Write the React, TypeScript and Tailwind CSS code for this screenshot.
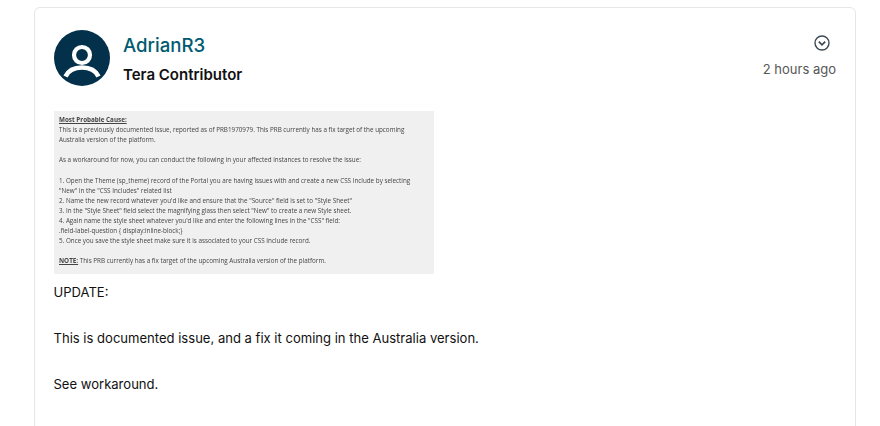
import React from "react";

const inter = { fontFamily: "Inter, sans-serif" };

function Avatar() {
  return (
    <svg width="56" height="56" viewBox="0 0 56 56" className="shrink-0">
      <circle cx="28" cy="28" r="28" fill="#03304a" />
      <circle cx="28" cy="25" r="8" fill="none" stroke="#fff" strokeWidth="4.2" />
      <path d="M11.5 46.5 C14.5 40 21 37.5 28 37.5 C35 37.5 41.5 40 44.5 46.5" fill="none" stroke="#fff" strokeWidth="4.6" />
    </svg>
  );
}

const lines: React.ReactNode[] = [
  <u className="font-bold">Most Probable Cause:</u>,
  "This is a previously documented issue, reported as of PRB1970979. This PRB currently has a fix target of the upcoming",
  "Australia version of the platform.",
  "\u00a0",
  "As a workaround for now, you can conduct the following in your affected instances to resolve the issue:",
  "\u00a0",
  "1. Open the Theme (sp_theme) record of the Portal you are having issues with and create a new CSS Include by selecting",
  "\"New\" in the \"CSS Includes\" related list",
  "2. Name the new record whatever you'd like and ensure that the \"Source\" field is set to \"Style Sheet\"",
  "3. In the \"Style Sheet\" field select the magnifying glass then select \"New\" to create a new Style sheet.",
  "4. Again name the style sheet whatever you'd like and enter the following lines in the \"CSS\" field:",
  ".field-label-question { display:inline-block;}",
  "5. Once you save the style sheet make sure it is associated to your CSS Include record.",
  "\u00a0",
  <span><u className="font-bold">NOTE:</u> This PRB currently has a fix target of the upcoming Australia version of the platform.</span>,
];

export default function App() {
  return (
    <div className="h-[426px] w-[880px] overflow-hidden bg-white" style={inter}>
      <div className="ml-[34px] mt-[7px] h-[500px] w-[822px] rounded-md border border-[#e6e6e6] bg-white pl-[19px] pr-[19px] pt-[22px]">
        <div className="flex items-start justify-between">
          <div className="flex gap-3">
            <Avatar />
            <div className="flex flex-col pl-[1px]">
              <span className="text-[18.6px] font-medium leading-[30px] text-[#005a72]">AdrianR3</span>
              <span className="mt-[3px] text-[15px] font-semibold leading-[24px] text-[#111]">Tera Contributor</span>
            </div>
          </div>
          <div className="flex flex-col items-end">
            <svg width="16" height="16" viewBox="0 0 16 16" className="mr-[6px] mt-[5px]" fill="none" stroke="#3b4a54" strokeWidth="1.4">
              <circle cx="8" cy="8" r="7" />
              <path d="M4.8 6.6 L8 9.8 L11.2 6.6" strokeWidth="1.7" />
            </svg>
            <span className="mt-[8px] text-[13px] leading-5 text-[#555]">2 hours ago</span>
          </div>
        </div>
        <div className="mt-[24px] h-[163px] w-[380px] overflow-hidden bg-[#f0f0f0] pl-[5px] pt-[4px]">
          <div
            className="whitespace-nowrap text-[6.3px] leading-[10.1px] text-[#444] blur-[0.55px]"
            style={{ fontFamily: "'Open Sans', sans-serif" }}
          >
            {lines.map((l, i) => (
              <div key={i}>{l}</div>
            ))}
          </div>
        </div>
        <div className="-ml-[0.5px] mt-[7px] text-[13.05px] leading-[23px] text-[#111]">
          <p>UPDATE:</p>
          <p>&nbsp;</p>
          <p>This is documented issue, and a fix it coming in the Australia version.</p>
          <p>&nbsp;</p>
          <p>See workaround.</p>
        </div>
      </div>
    </div>
  );
}
